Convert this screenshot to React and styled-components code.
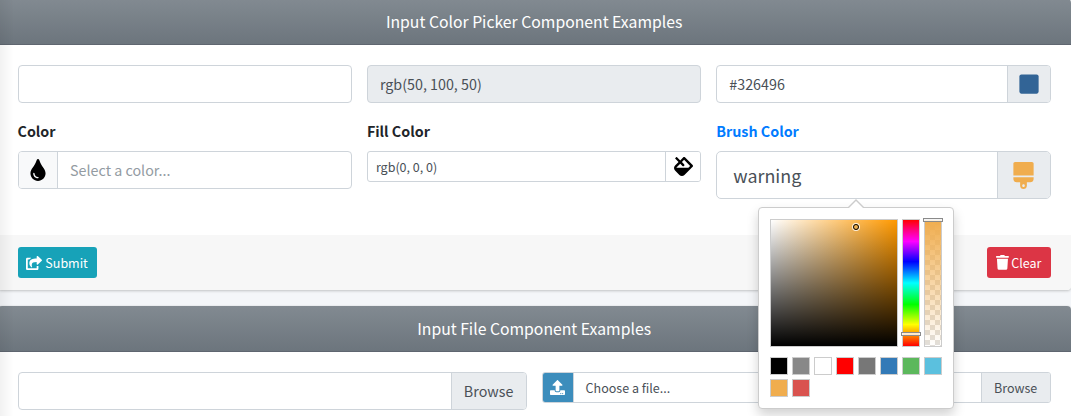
import React from "react";
import styled, { createGlobalStyle, css } from "styled-components";
import { FaTint, FaFill, FaSquare, FaBrush, FaShareSquare, FaUpload } from "react-icons/fa";

const GlobalStyle = createGlobalStyle`
  *, *::before, *::after { box-sizing: border-box; }
  html, body { margin: 0; height: 100%; overflow: hidden; }
  body {
    background: #f4f6f9;
    color: #212529;
    font-family: "Source Sans Pro", "Noto Sans CJK SC", "Liberation Sans", sans-serif;
    font-size: 14.3px;
    line-height: 24px;
  }
`;

const Page = styled.main`
  margin: -1px 0 0 -2.5px;
  width: 1073.2px;
  height: 417px;
  overflow: hidden;
  display: flex;
  flex-direction: column;
  gap: 16px;
`;

const SidebarShadow = styled.div`
  position: fixed;
  inset: 0 auto 0 0;
  width: 14px;
  background: linear-gradient(to right, rgba(0, 0, 0, 0.055), rgba(0, 0, 0, 0.018) 60%, transparent);
  pointer-events: none;
`;

const Card = styled.section`
  flex: none;
  background: #fff;
  border-radius: 4px;
  box-shadow: 0 0 1px rgba(0, 0, 0, 0.125), 0 1px 3px rgba(0, 0, 0, 0.2);
`;

const CardHeader = styled.header`
  height: 46px;
  display: flex;
  align-items: center;
  justify-content: center;
  border-bottom: 1px solid #5f6670;
  border-radius: 4px 4px 0 0;
  background: linear-gradient(#828a91, #6c757d);
  color: #fff;
`;

const Title = styled.h3`
  margin: 0;
  font-size: 15.75px;
  font-weight: 400;
  line-height: 21px;
`;

const CardBody = styled.div`
  padding: 20px;
  display: grid;
  grid-template-columns: repeat(${(p) => p.$columns}, 1fr);
  column-gap: 15px;
  align-items: start;
`;

const Group = styled.div`
  margin-bottom: 16px;
  min-width: 0;
`;

const Label = styled.label`
  display: block;
  margin-bottom: 8px;
  font-weight: 700;
  color: ${(p) => p.$color || "#212529"};
`;

const sizes = {
  sm: css`height: 31px; font-size: 12.5px; border-radius: 3px; --pad: 8px;`,
  md: css`height: 38px; font-size: 14.3px; border-radius: 4px; --pad: 12px;`,
  lg: css`height: 48px; font-size: 17.9px; border-radius: 5px; --pad: 16px;`,
};

const Field = styled.div`
  ${(p) => sizes[p.$size || "md"]}
  display: flex;
  border: 1px solid #ced4da;
  background: ${(p) => (p.$disabled ? "#e9ecef" : "#fff")};
  color: #495057;
  overflow: hidden;
`;

const Value = styled.div`
  flex: 1;
  min-width: 0;
  display: flex;
  align-items: center;
  padding: 0 var(--pad);
  white-space: nowrap;
  color: ${(p) => (p.$placeholder ? "#939ba2" : "inherit")};
`;

const PrependedValue = styled(Value)`
  padding: 0 12.6px;
`;

const FileName = styled(Value)`
  padding: 0 12px;
`;

const Addon = styled.div`
  flex: none;
  width: ${(p) => p.$width}px;
  display: flex;
  align-items: center;
  justify-content: center;
  background: ${(p) => p.$bg || "#e9ecef"};
  color: ${(p) => p.$color || "#495057"};
  border: 0 solid #ced4da;
  border-${(p) => (p.$side === "start" ? "right" : "left")}-width: 1px;
`;

const UploadAddon = styled(Addon)`
  margin: -1px 0 -1px -1px;
`;

const CardFooter = styled.footer`
  height: 55px;
  padding: 12px 20px;
  display: flex;
  justify-content: space-between;
  background: #f7f7f7;
  border-radius: 0 0 4px 4px;
`;

const Button = styled.button`
  height: 31px;
  width: ${(p) => p.$width}px;
  padding: 0;
  display: flex;
  align-items: center;
  justify-content: center;
  gap: ${(p) => p.$gap}px;
  border: 0;
  border-radius: 3px;
  background: ${(p) => p.$bg};
  color: #fff;
  font-family: inherit;
  font-size: 12.5px;
  line-height: 21px;
`;

const Picker = styled.div`
  position: fixed;
  left: 758px;
  top: 207px;
  width: 196px;
  height: 202px;
  padding: 11px 10px 10px 11px;
  border: 1px solid #ccc;
  border-radius: 4px;
  background: #fff;
  box-shadow: 0 6px 12px rgba(0, 0, 0, 0.18);

  &::before, &::after {
    content: "";
    position: absolute;
    left: 89px;
    bottom: calc(100% + 1px);
    border: 8px solid transparent;
    border-top: 0;
    border-bottom-color: #ccc;
  }
  &::after {
    left: 90px;
    bottom: 100%;
    border-width: 7px;
    border-top: 0;
    border-bottom-color: #fff;
  }
`;

const Bars = styled.div`
  display: flex;
  gap: 4px;
  height: 128px;
`;

const Bar = styled.div`
  position: relative;
  width: 18px;
  border: 1px solid #ccc;
`;

const Saturation = styled(Bar)`
  width: 128px;
  background: linear-gradient(to bottom, transparent, #000), linear-gradient(to right, #fff, #ff9900);
`;

const Hue = styled(Bar)`
  background: linear-gradient(to top, #f00 0%, #ff8000 8%, #ff0 17%, #0f0 33%, #0ff 50%, #00f 67%, #f0f 83%, #ff0080 92%, #f00 100%);
`;

const Alpha = styled(Bar)`
  background:
    linear-gradient(to bottom, #f0ad4e, rgba(240, 173, 78, 0)),
    repeating-conic-gradient(#fff 0 25%, #e2dfda 0 50%) 0 0 / 10px 10px;
`;

const Guide = styled.i`
  position: absolute;
  left: -2px;
  top: ${(p) => p.$top}px;
  width: 20px;
  height: 4px;
  border: 1px solid #8a8a8a;
  background: rgba(255, 255, 255, 0.8);
`;

const Dot = styled.i`
  position: absolute;
  left: 82px;
  top: 4px;
  width: 6px;
  height: 6px;
  border: 1px solid #000;
  border-radius: 50%;
  box-shadow: 0 0 0 1px rgba(255, 255, 255, 0.8);
`;

const Swatches = styled.div`
  margin-top: 10px;
  display: grid;
  grid-template-columns: repeat(8, 18px);
  gap: 4px;
`;

const Swatch = styled.div`
  height: 18px;
  border: 1px solid #ccc;
  background: ${(p) => p.$color};
`;

const palette = ["#000", "#888", "#fff", "#f00", "#777", "#337ab7", "#5cb85c", "#5bc0de", "#f0ad4e", "#d9534f"];

function TrashIcon() {
  return (
    <svg width="12.9" height="14.7" viewBox="0 0 448 512" fill="currentColor">
      <path d="M432 32H312l-9.4-18.7A24 24 0 0 0 281.1 0H166.8a23.72 23.72 0 0 0-21.4 13.3L136 32H16A16 16 0 0 0 0 48v32a16 16 0 0 0 16 16h416a16 16 0 0 0 16-16V48a16 16 0 0 0-16-16zM53.2 467a48 48 0 0 0 47.9 45h245.8a48 48 0 0 0 47.9-45L416 128H32z" />
    </svg>
  );
}

function ColorPicker() {
  return (
    <Picker>
      <Bars>
        <Saturation><Dot /></Saturation>
        <Hue><Guide $top={112} /></Hue>
        <Alpha><Guide $top={-2} /></Alpha>
      </Bars>
      <Swatches>
        {palette.map((color) => <Swatch key={color} $color={color} />)}
      </Swatches>
    </Picker>
  );
}

export default function App() {
  return (
    <>
      <GlobalStyle />
      <Page>
        <Card>
          <CardHeader><Title>Input Color Picker Component Examples</Title></CardHeader>
          <CardBody $columns={3}>
            <Group><Field><Value /></Field></Group>
            <Group><Field $disabled><Value>rgb(50, 100, 50)</Value></Field></Group>
            <Group>
              <Field>
                <Value>#326496</Value>
                <Addon $width={43} $color="#326496"><FaSquare size={22} /></Addon>
              </Field>
            </Group>
            <Group>
              <Label>Color</Label>
              <Field>
                <Addon $side="start" $width={39} $bg="#f8f9fa" $color="#000"><FaTint size={22} /></Addon>
                <PrependedValue $placeholder>Select a color...</PrependedValue>
              </Field>
            </Group>
            <Group>
              <Label>Fill Color</Label>
              <Field $size="sm">
                <Value>rgb(0, 0, 0)</Value>
                <Addon $width={35} $bg="#fff" $color="#000"><FaFill size={19} /></Addon>
              </Field>
            </Group>
            <Group>
              <Label $color="#007bff">Brush Color</Label>
              <Field $size="lg">
                <Value>warning</Value>
                <Addon $width={53} $color="#f0ad4e"><FaBrush size={27} /></Addon>
              </Field>
            </Group>
          </CardBody>
          <CardFooter>
            <Button $width={79} $gap={3.2} $bg="#17a2b8"><FaShareSquare size={16} />Submit</Button>
            <Button $width={64} $gap={2.5} $bg="#dc3545"><TrashIcon />Clear</Button>
          </CardFooter>
        </Card>
        <Card>
          <CardHeader><Title>Input File Component Examples</Title></CardHeader>
          <CardBody $columns={2}>
            <Group>
              <Field>
                <Value />
                <Addon $width={75}>Browse</Addon>
              </Field>
            </Group>
            <Group>
              <Field $size="sm">
                <UploadAddon $side="start" $width={32} $bg="#3c8dbc" $color="#fff"><FaUpload size={15} /></UploadAddon>
                <FileName>Choose a file...</FileName>
                <Addon $width={69}>Browse</Addon>
              </Field>
            </Group>
          </CardBody>
        </Card>
      </Page>
      <SidebarShadow />
      <ColorPicker />
    </>
  );
}
